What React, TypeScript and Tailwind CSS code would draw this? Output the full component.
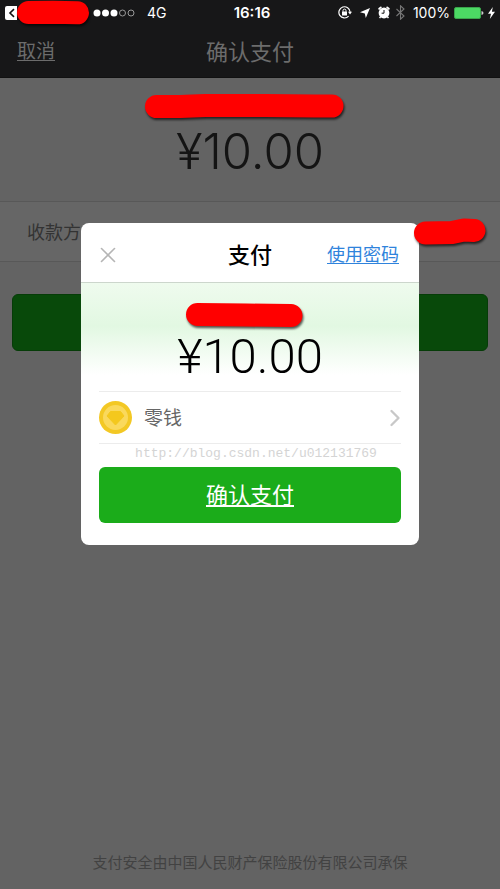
import { ChevronRight, X } from "lucide-react";

function Scribble({ d, width, height, thickness }: { d: string; width: number; height: number; thickness: number }) {
  return (
    <svg
      width={width}
      height={height}
      viewBox={`0 0 ${width} ${height}`}
      className="shrink-0 overflow-visible drop-shadow-[1px_2px_1px_rgba(0,0,0,0.65)]"
      aria-hidden="true"
    >
      <path d={d} fill="none" stroke="#ff0000" strokeWidth={thickness} strokeLinecap="round" strokeLinejoin="round" />
    </svg>
  );
}

function StatusBar() {
  return (
    <div className="grid h-[25px] grid-cols-[1fr_auto_1fr] items-center text-[14px] leading-[25px] text-white">
      <div className="flex items-center pl-[5px]">
        <svg width="12" height="14" viewBox="0 0 12 14" className="shrink-0" aria-hidden="true">
          <path d="M2 0H12V14H2Q0 14 0 12V2Q0 0 2 0Z" fill="#fff" />
          <path d="M9 3.2L5 7L9 10.8" fill="none" stroke="#111" strokeWidth="1.6" />
        </svg>
        <Scribble width={72} height={23} thickness={23} d="M11.5 11.5L36 11.2L60.5 11.8" />
        <svg width="42" height="8" viewBox="0 0 42 8" className="ml-1 shrink-0" aria-hidden="true">
          <circle cx="4" cy="4" r="3.5" fill="#fff" />
          <circle cx="12.5" cy="4" r="3.5" fill="#fff" />
          <circle cx="21" cy="4" r="3.5" fill="#fff" />
          <circle cx="29.5" cy="4" r="3" fill="none" stroke="#999" />
          <circle cx="38" cy="4" r="3" fill="none" stroke="#999" />
        </svg>
        <span className="ml-3">4G</span>
      </div>
      <time className="pl-1 text-[15px] font-semibold">16:16</time>
      <div className="flex items-center justify-end pr-[5px]">
        <svg width="14" height="13" viewBox="0 0 14 13" className="mr-2 shrink-0" aria-hidden="true">
          <path d="M10.6 10.2A5.6 5.6 0 1 1 12.1 6" fill="none" stroke="#fff" strokeWidth="1.2" />
          <path d="M10 5.8H14L12 8.5Z" fill="#fff" />
          <rect x="4" y="5.6" width="5" height="4" rx=".4" fill="#fff" />
          <path d="M5 5.8V4.6A1.5 1.5 0 0 1 8 4.6V5.8" fill="none" stroke="#fff" />
        </svg>
        <svg width="10" height="10" viewBox="0 0 10 10" className="mr-2 shrink-0" aria-hidden="true">
          <path d="M10 0L5.8 10L4.8 5.4L0 4.2Z" fill="#fff" />
        </svg>
        <svg width="12" height="13" viewBox="0 0 12 13" className="mr-1.5 shrink-0" aria-hidden="true">
          <circle cx="6" cy="7" r="5.4" fill="#fff" />
          <path d="M1.2 2.8L2.8 1.4M10.8 2.8L9.2 1.4" stroke="#fff" strokeWidth="1.8" strokeLinecap="round" />
          <path d="M2.6 10.6L1.6 12.2M9.4 10.6L10.4 12.2" stroke="#fff" strokeWidth="1.4" />
          <path d="M6 4V7.2H3.6" fill="none" stroke="#111" strokeWidth="1" />
        </svg>
        <svg width="9" height="15" viewBox="0 0 9 15" className="mr-2 shrink-0" aria-hidden="true">
          <path d="M.5 4L8 11L4.5 14.2V.8L8 4L.5 11" fill="none" stroke="#777" strokeWidth="1.1" />
        </svg>
        <span>100%</span>
        <svg width="30" height="12" viewBox="0 0 30 12" className="ml-1 shrink-0" aria-hidden="true">
          <rect x=".5" y=".5" width="26" height="11" rx="1.5" fill="#4cd964" stroke="#3aa54c" />
          <path d="M27.5 4Q29.5 4.5 29.5 6Q29.5 7.5 27.5 8Z" fill="#ccc" />
        </svg>
        <svg width="7" height="12" viewBox="0 0 7 12" className="ml-1 shrink-0" aria-hidden="true">
          <path d="M4.8 0L0 6.8H3L1.8 12L7 4.8H3.9Z" fill="#fff" />
        </svg>
      </div>
    </div>
  );
}

function CoinIcon() {
  return (
    <svg width="33" height="33" viewBox="0 0 33 33" className="shrink-0" aria-hidden="true">
      <circle cx="16.5" cy="16.5" r="16.5" fill="#f3c824" />
      <circle cx="16.5" cy="16.5" r="12.5" fill="#fad95c" />
      <path d="M11.5 10.5H21.5L25 15L16.5 24L8 15Z" fill="#f4c81d" stroke="#f4c81d" strokeLinejoin="round" />
    </svg>
  );
}

function PayDialog() {
  return (
    <div role="dialog" aria-labelledby="pay-title" className="w-[338px] rounded-lg bg-white">
      <div className="grid h-[60px] grid-cols-[1fr_auto_1fr] items-center border-b border-[#ccd6cc] px-5 pt-1">
        <button type="button" aria-label="关闭" className="justify-self-start text-[#b5b5b5]">
          <X size={26} strokeWidth={1.5} className="-ml-1.5" />
        </button>
        <h2 id="pay-title" className="text-[22px] leading-8 font-medium text-black">支付</h2>
        <a href="#password" className="justify-self-end text-lg leading-8 text-[#2f83dc] underline underline-offset-2">
          使用密码
        </a>
      </div>
      <div className="bg-linear-to-b from-[#effbee] via-[#e2f8e2] via-40% to-white to-85% pt-5">
        <div className="flex justify-center pr-3">
          <Scribble width={117} height={24} thickness={23} d="M11.5 11.5L60 12L105 12.5" />
        </div>
        <p className="h-16 text-center font-['Roboto','Noto_Sans_CJK_SC',sans-serif] text-[49px] leading-[60px] font-light text-black">
          ¥10.00
        </p>
      </div>
      <div className="px-[18px] pb-[22px]">
        <button
          type="button"
          className="flex h-[53px] w-full items-center border-y border-[#ececec] text-left text-[19px] text-[#666]"
        >
          <CoinIcon />
          <span className="ml-3 flex-1 pt-1">零钱</span>
          <ChevronRight size={28} strokeWidth={2} className="-mr-2 text-[#c8c8c8]" />
        </button>
        <p className="h-[23px] pl-3 text-center font-['Liberation_Mono',monospace] text-[13px] leading-5 text-[#d4d4d4]">
          http://blog.csdn.net/u012131769
        </p>
        <button
          type="button"
          className="h-[56px] w-full rounded-md bg-[#1bac1a] text-[22px] text-white underline underline-offset-2"
        >
          确认支付
        </button>
      </div>
    </div>
  );
}

export default function App() {
  return (
    <div className="relative flex min-h-screen flex-col bg-[#636363] font-['Inter','Noto_Sans_CJK_SC',sans-serif]">
      <header className="h-[78px] border-b border-[#111] bg-[#171718]">
        <StatusBar />
        <div className="grid h-[52px] grid-cols-[1fr_auto_1fr] items-center px-[17px] pt-0.5 text-[#6c6c6c]">
          <a href="#cancel" className="justify-self-start text-[19px] underline underline-offset-2">取消</a>
          <h1 className="text-[22px]">确认支付</h1>
        </div>
      </header>

      <main className="flex-1">
        <section className="flex h-[123px] flex-col items-center pt-4">
          <div className="pr-3">
            <Scribble width={199} height={24} thickness={23} d="M11.5 12.5L35 12.5L60 11.5L120 11.5L170 12L187 12" />
          </div>
          <p className="text-[49px] leading-[68px] font-light text-[#141414]">¥10.00</p>
        </section>
        <section className="flex h-[61px] items-center justify-between border-y border-[#585858] bg-[#666] pl-[27px] text-lg text-[#333]">
          <span className="pt-0.5">收款方</span>
          <div className="relative z-10 mr-3.5">
            <Scribble width={72} height={25} thickness={23} d="M11.5 14L38 13.5L50 11L60 11.5" />
          </div>
        </section>
        <div className="px-3 pt-8">
          <button type="button" aria-label="转账" className="h-[57px] w-full rounded-md border border-[#063c08] bg-[#08490a]" />
        </div>
      </main>

      <footer className="pb-3.5 text-center text-[15px] leading-6 text-[#424242]">
        支付安全由中国人民财产保险股份有限公司承保
      </footer>

      <div className="absolute inset-x-0 top-[223px] flex justify-center">
        <PayDialog />
      </div>
    </div>
  );
}
